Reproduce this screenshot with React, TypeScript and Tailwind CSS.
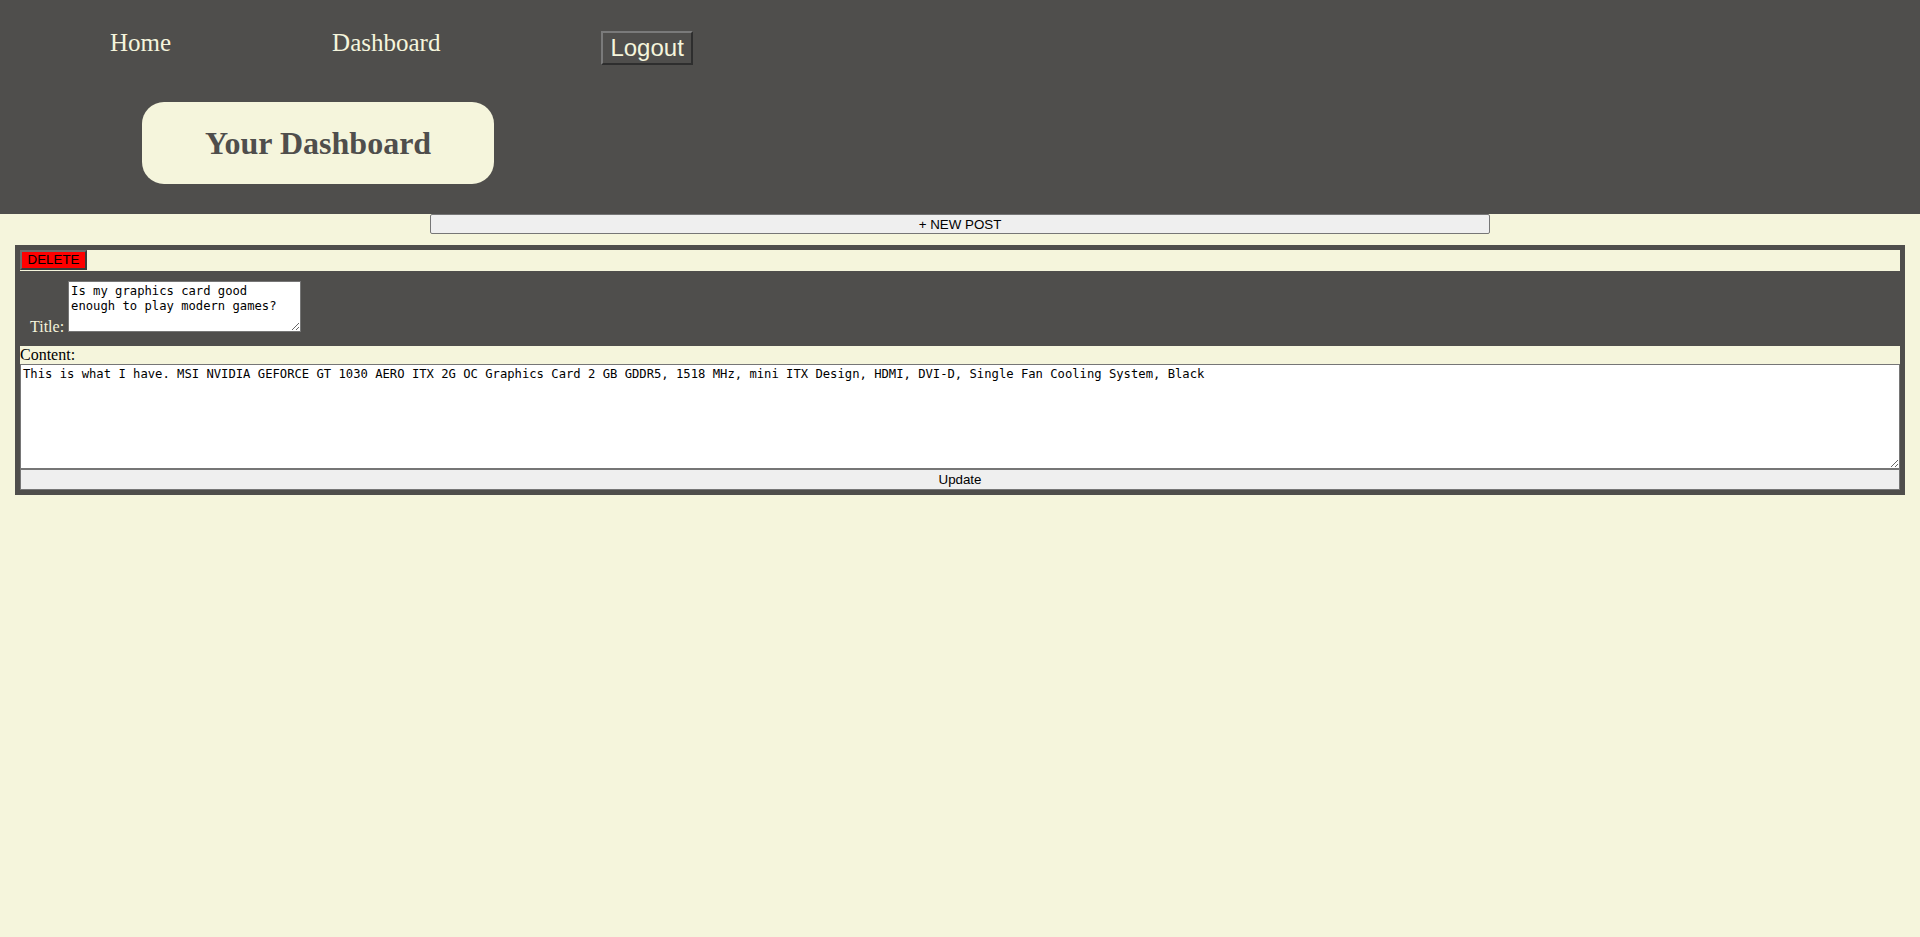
import { useState } from "react";

const serif = "font-['Liberation_Serif','Times_New_Roman',serif]";
const sans = "font-['Liberation_Sans',Arial,sans-serif]";
const mono = "font-['DejaVu_Sans_Mono','Liberation_Mono',monospace]";

const App = () => {
  const [title, setTitle] = useState(
    "Is my graphics card good enough to play modern games?"
  );
  const [content, setContent] = useState(
    "This is what I have. MSI NVIDIA GEFORCE GT 1030 AERO ITX 2G OC Graphics Card 2 GB GDDR5, 1518 MHz, mini ITX Design, HDMI, DVI-D, Single Fan Cooling System, Black"
  );

  return (
    <div className={`min-h-screen bg-[#f5f5dc] ${serif}`}>
      {/* header */}
      <header className="bg-[#4f4e4c] h-[214px] flex flex-col">
        <nav className="h-[102px] pt-[29px] pl-[110px] flex items-start gap-[161px]">
          <a href="#" className="text-[25px] leading-[1.15] text-[#f5f5dc]">
            Home
          </a>
          <a href="#" className="text-[25px] leading-[1.15] text-[#f5f5dc]">
            Dashboard
          </a>
          <button
            className={`${sans} mt-[2px] text-[24px] leading-[1.15] text-[#f5f5dc] bg-[#4f4e4c] px-[7px] py-[1px] border-2 border-t-[#7a7a7a] border-l-[#7a7a7a] border-b-[#2e2e2e] border-r-[#2e2e2e]`}
          >
            Logout
          </button>
        </nav>
        <div className="ml-[142px] w-fit h-[82px] px-[63px] rounded-[22px] bg-[#f5f5dc] flex items-center">
          <h1 className="text-[32px] font-bold text-[#4f4e4c] leading-[1.15]">
            Your Dashboard
          </h1>
        </div>
      </header>

      {/* new post */}
      <button
        className={`${sans} block mx-auto w-[1060px] h-[20px] text-[13.33px] text-black bg-[#efefef] border border-[#767676] rounded-[2px]`}
      >
        + NEW POST
      </button>

      {/* post */}
      <div className="mt-[11px] mx-[15px] border-[5px] border-[#4f4e4c] bg-[#4f4e4c]">
        <div className="h-[21px] bg-[#f5f5dc] flex items-start">
          <button
            className={`${sans} w-[67px] h-[20px] text-[13.33px] leading-none text-black bg-[#ff0000] border-2 border-t-[#6e6e6e] border-l-[#6e6e6e] border-b-[#3a3a3a] border-r-[#3a3a3a]`}
          >
            DELETE
          </button>
        </div>
        <div className="h-[75px] pt-[10px] pl-[10px] text-[16px] text-[#f5f5dc]">
          <label>
            Title:{" "}
            <textarea
              value={title}
              onChange={(e) => setTitle(e.target.value)}
              className={`${mono} w-[233px] h-[51px] p-[2px] text-[12.2px] leading-[15px] text-black bg-white border border-[#767676] overflow-hidden`}
            />
          </label>
        </div>
        <div className="bg-[#f5f5dc] h-[18px] text-[16px] leading-[18px] text-black">
          Content:
        </div>
        <textarea
          value={content}
          onChange={(e) => setContent(e.target.value)}
          className={`${mono} block w-full h-[105px] p-[2px] text-[12.2px] leading-[15px] text-black bg-white border border-[#767676]`}
        />
        <button
          className={`${sans} block w-full h-[21px] text-[13.33px] text-black bg-[#efefef] border border-[#767676]`}
        >
          Update
        </button>
      </div>
    </div>
  );
};

export default App;
